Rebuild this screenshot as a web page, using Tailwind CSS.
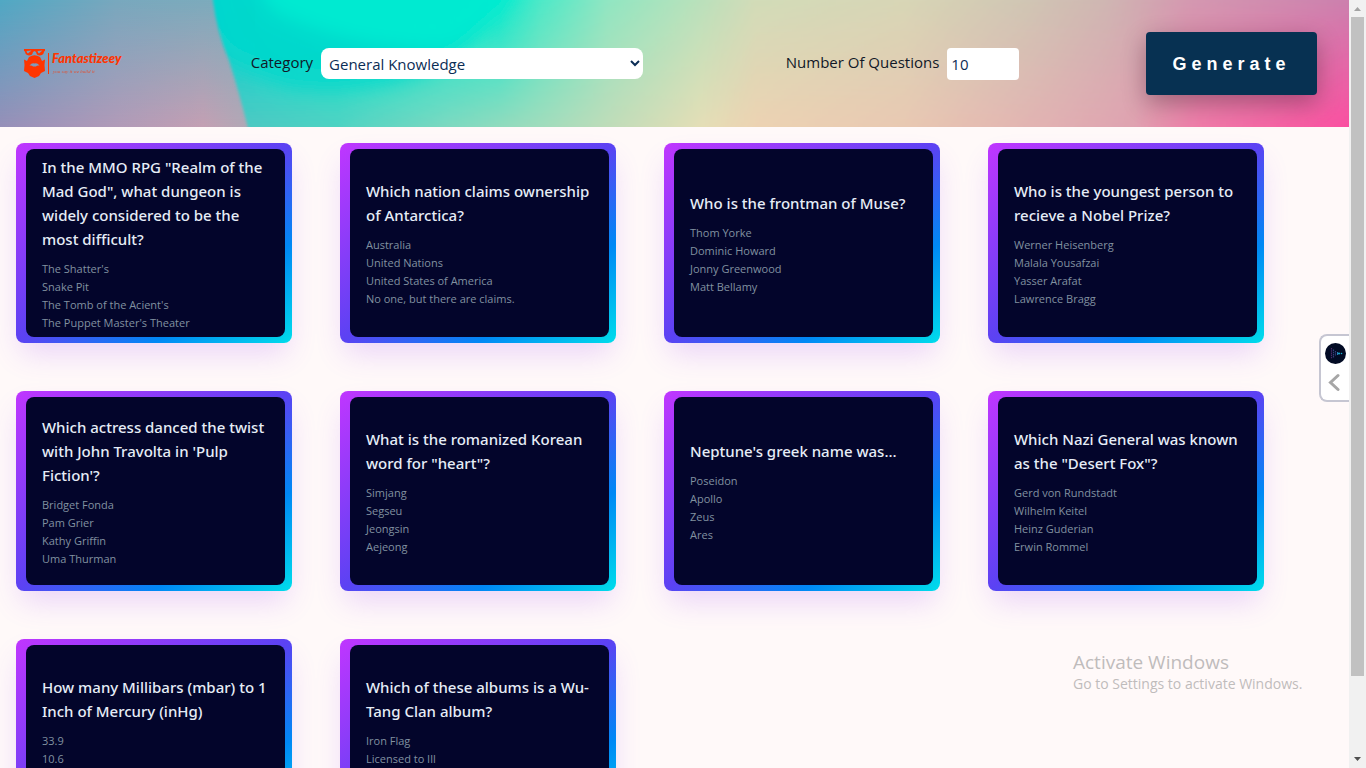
<!DOCTYPE html>
<html lang="en">
<head>
<meta charset="utf-8">
<meta name="viewport" content="width=device-width, initial-scale=1">
<title>Fantastizeey Quiz</title>
<script src="https://cdn.jsdelivr.net/npm/@tailwindcss/browser@4"></script>
</head>
<body class="flex h-screen overflow-hidden bg-[#fff9f9] font-['Open_Sans','Noto_Sans',sans-serif]">
<div class="relative min-w-0 flex-1">
  <div class="h-full overflow-x-hidden overflow-y-auto [scrollbar-width:none]">
  <header class="relative isolate flex items-center justify-between py-8 pr-8 pl-6">
    <svg class="absolute inset-0 -z-10 h-full w-full" viewBox="0 0 1349 127" preserveAspectRatio="none" aria-hidden="true">
      <defs>
        <linearGradient id="lt"><stop offset="0" stop-color="#50a8c4"/><stop offset=".4" stop-color="#78a8be"/><stop offset="1" stop-color="#80aebb"/></linearGradient>
        <linearGradient id="lb"><stop offset="0" stop-color="#968fb8"/><stop offset=".4" stop-color="#b19ab8"/><stop offset=".7" stop-color="#c49fb3"/><stop offset="1" stop-color="#a0b0b8"/></linearGradient>
        <linearGradient id="rt" gradientUnits="userSpaceOnUse" x1="0" x2="1349" y1="0" y2="0"><stop offset=".158" stop-color="#00d2d4"/><stop offset=".21" stop-color="#00e4d4"/><stop offset=".28" stop-color="#00eed2"/><stop offset=".37" stop-color="#0cebce"/><stop offset=".4" stop-color="#4ce9c8"/><stop offset=".45" stop-color="#90e6c2"/><stop offset=".51" stop-color="#b4e2bc"/><stop offset=".56" stop-color="#d2dcb8"/><stop offset=".67" stop-color="#d8d6b6"/><stop offset=".76" stop-color="#d0c6b4"/><stop offset=".82" stop-color="#cfb6b2"/><stop offset=".88" stop-color="#d499b0"/><stop offset="1" stop-color="#cc80ae"/></linearGradient>
        <linearGradient id="rb" gradientUnits="userSpaceOnUse" x1="0" x2="1349" y1="0" y2="0"><stop offset=".17" stop-color="#4cc6c2"/><stop offset=".25" stop-color="#4ed2c2"/><stop offset=".33" stop-color="#7cd8c0"/><stop offset=".4" stop-color="#a0dcbc"/><stop offset=".46" stop-color="#c4dcb8"/><stop offset=".52" stop-color="#e4deb6"/><stop offset=".56" stop-color="#ecd2b2"/><stop offset=".67" stop-color="#e8c8b2"/><stop offset=".76" stop-color="#e2b4b2"/><stop offset=".84" stop-color="#dfa2b0"/><stop offset=".89" stop-color="#f07aa8"/><stop offset="1" stop-color="#fa4ea0"/></linearGradient>
        <linearGradient id="fade" gradientUnits="userSpaceOnUse" x1="0" x2="0" y1="0" y2="127"><stop offset="0" stop-color="#000"/><stop offset="1" stop-color="#fff"/></linearGradient>
        <mask id="down" maskUnits="userSpaceOnUse" x="-20" y="-20" width="1400" height="170"><rect x="-20" y="-20" width="1400" height="170" fill="url(#fade)"/></mask>
        <clipPath id="blob"><path d="M210 -20L213 0Q217 32 229 60Q240 95 248 127L253 150H1380V-20Z"/></clipPath>
        <filter id="soft" x="-20%" y="-50%" width="140%" height="200%"><feGaussianBlur stdDeviation="10"/></filter>
        <filter id="edge"><feGaussianBlur stdDeviation="1.5"/></filter>
      </defs>
      <rect width="290" height="127" fill="url(#lt)"/>
      <rect width="290" height="127" fill="url(#lb)" mask="url(#down)"/>
      <g filter="url(#edge)">
        <g clip-path="url(#blob)">
          <rect x="200" y="-20" width="1180" height="170" fill="url(#rt)"/>
          <rect x="200" y="-20" width="1180" height="170" fill="url(#rb)" mask="url(#down)"/>
          <path d="M200 -30H495Q480 40 430 70Q370 96 290 86Q240 70 220 50Z" fill="#00d8cc" opacity=".85" filter="url(#soft)"/>
          <path d="M250 -40H525Q500 24 450 50Q350 50 270 10Z" fill="#00ecd2" opacity=".9" filter="url(#soft)"/>
        </g>
      </g>
    </svg>
    <a href="#" aria-label="Fantastizeey home" class="block">
      <svg class="h-8 w-25" viewBox="0 0 100 32" fill="#ff3500" aria-hidden="true">
        <path fill-rule="evenodd" d="M0 1H21V3L20 3.500Q20 7 16 7.500Q12.500 7.500 12 4L10.500 3L9 4Q8.500 7.500 5 7.500Q1 7 1 3.500L0 3ZM2.500 3Q3 5 4 5.500L7.500 2.500ZM13.500 3Q14 5 15 5.500L18.500 2.500Z"/>
        <path fill-rule="evenodd" d="M5 9Q10.500 5.500 16 9L18 13L21 11.500L20.500 17L21 23L17 25L15 28L10.500 30L6 28L4 25L0 23L.5 17L0 11.500L3 13ZM5.500 17.500Q8 14.500 10.500 15.500Q13 14.500 15.500 17.500Q13 17 12 18.500H9Q8 17 5.500 17.500Z"/>
        <path d="M24 5h1v21h-1z"/>
        <text x="28" y="15" font-family="Lato" font-weight="900" font-style="italic" font-size="13">Fantastizeey</text>
        <text x="29" y="25" font-family="Liberation Serif" font-style="italic" font-size="5" opacity=".75">you say it we build it</text>
      </svg>
    </a>
    <div class="mr-4 flex items-center gap-2">
      <label for="category" class="mb-0.5 text-[15px] text-[#111827]">Category</label>
      <select id="category" class="h-[31px] w-[322px] rounded-lg bg-white px-1 text-[15px] text-[#0b2d55]"><option>General Knowledge</option></select>
    </div>
    <div class="flex items-center gap-2">
      <label for="amount" class="mb-0.5 text-[15px] text-[#111827]">Number Of Questions</label>
      <input id="amount" type="text" inputmode="numeric" value="10" class="h-8 w-18 rounded bg-white px-1 text-[15px] text-[#0b2d55]">
    </div>
    <button type="button" class="h-[63px] min-w-[171px] rounded bg-[#073152] px-6 font-['Liberation_Sans',sans-serif] text-lg font-bold tracking-[5px] text-white shadow-[0_8px_24px_rgba(0,0,0,0.3)]">Generate</button>
  </header>

  <main id="cards" class="grid grid-cols-[repeat(auto-fill,276px)] gap-12 p-4"></main>
  </div>

  <button type="button" aria-label="Open side panel" class="absolute top-[334px] right-0 flex h-17 w-[30px] flex-col items-center gap-2 rounded-l-lg border-2 border-r-0 border-[#c6c6d2] bg-white pt-[7px]">
    <svg class="h-[21px] w-[21px]" viewBox="0 0 21 21" aria-hidden="true">
      <circle cx="10.500" cy="10.500" r="10.500" fill="#020b24"/>
      <path d="M6.500 5v11" stroke="#4b2a68" stroke-width="1.200" stroke-dasharray="1.500 .7"/>
      <path d="M8.500 6.500v8M10.500 8v5" stroke="#34407c" stroke-width="1.200" stroke-dasharray="1.500 .7"/>
      <path d="M12.500 9v3" stroke="#2878b8" stroke-width="1"/>
      <circle cx="14" cy="10.500" r="1" fill="#18b8d8"/><circle cx="16.500" cy="10.500" r=".8" fill="#18b8d8"/>
    </svg>
    <svg class="mr-0.5 h-5 w-3" viewBox="0 0 12 20" fill="none" stroke="#a6a6a6" stroke-width="3" stroke-linecap="round" aria-hidden="true"><path d="M10 3.500L2.500 10.500l7.500 7"/></svg>
  </button>

  <div class="absolute right-10 bottom-[74px] w-[236px] text-[#bfbcbc]">
    <p class="text-[19px] leading-6">Activate Windows</p>
    <p class="text-sm leading-5">Go to Settings to activate Windows.</p>
  </div>
</div>

<div class="flex w-[17px] flex-col items-center bg-[#f1f1f1]" aria-hidden="true">
  <svg class="h-[17px] w-[17px]" viewBox="0 0 17 17"><path d="M5 11l3.500-4 3.500 4z" fill="#a3a3a3"/></svg>
  <div class="h-[659px] w-[13px] bg-[#c1c1c1]"></div>
  <svg class="mt-auto h-[17px] w-[17px]" viewBox="0 0 17 17"><path d="M5 6h7L8.500 10z" fill="#505050"/></svg>
</div>

<template id="card">
  <article class="h-50 rounded-lg bg-[linear-gradient(144deg,#c036ff,#5b42f3_50%,#0088f5_75%,#00ddeb)] py-1.5 pr-[7px] pl-2.5 shadow-[0_15px_30px_-5px_rgba(151,65,252,0.2)]">
    <div class="flex h-full flex-col justify-center gap-[9px] rounded-lg bg-[#03052b] px-4">
      <h2 class="font-['Noto_Sans','Open_Sans',sans-serif] text-[15px] leading-6 font-medium text-[#e6edf7]"></h2>
      <ul class="text-[11px] leading-[18px] text-[#8191a0]"></ul>
    </div>
  </article>
</template>
<script>
const questions = [
  ['In the MMO RPG "Realm of the Mad God", what dungeon is widely considered to be the most difficult?', "The Shatter's", "Snake Pit", "The Tomb of the Acient's", "The Puppet Master's Theater"],
  ["Which nation claims ownership of Antarctica?", "Australia", "United Nations", "United States of America", "No one, but there are claims."],
  ["Who is the frontman of Muse?", "Thom Yorke", "Dominic Howard", "Jonny Greenwood", "Matt Bellamy"],
  ["Who is the youngest person to recieve a Nobel Prize?", "Werner Heisenberg", "Malala Yousafzai", "Yasser Arafat", "Lawrence Bragg"],
  ["Which actress danced the twist with John Travolta in 'Pulp Fiction'?", "Bridget Fonda", "Pam Grier", "Kathy Griffin", "Uma Thurman"],
  ['What is the romanized Korean word for "heart"?', "Simjang", "Segseu", "Jeongsin", "Aejeong"],
  ["Neptune's greek name was...", "Poseidon", "Apollo", "Zeus", "Ares"],
  ['Which Nazi General was known as the "Desert Fox"?', "Gerd von Rundstadt", "Wilhelm Keitel", "Heinz Guderian", "Erwin Rommel"],
  ["How many Millibars (mbar) to 1 Inch of Mercury (inHg)", "33.9", "10.6", "27.2", "1"],
  ["Which of these albums is a Wu-Tang Clan album?", "Iron Flag", "Licensed to Ill", "Midnight Marauders", "Paul's Boutique"]
];
const grid = document.getElementById("cards");
const template = document.getElementById("card");
for (const [title, ...answers] of questions) {
  const card = template.content.cloneNode(true);
  card.querySelector("h2").textContent = title;
  for (const answer of answers) {
    const li = document.createElement("li");
    li.textContent = answer;
    card.querySelector("ul").append(li);
  }
  grid.append(card);
}
</script>
</body>
</html>
